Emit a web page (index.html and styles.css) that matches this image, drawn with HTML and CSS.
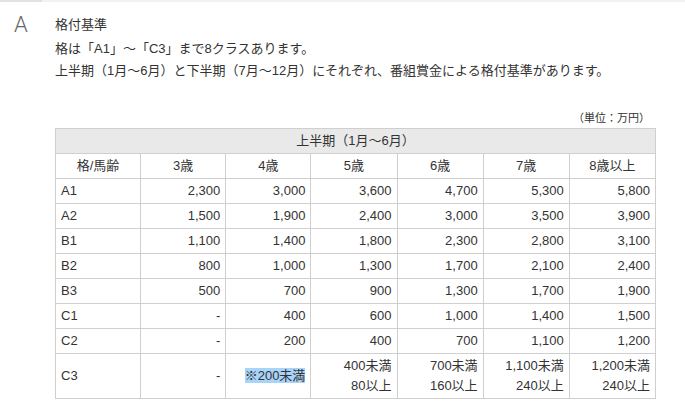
FILE: index.html
```html
<!DOCTYPE html>
<html lang="ja">
<head>
<meta charset="utf-8">
<link rel="stylesheet" href="styles.css">
</head>
<body>
<div class="topbar"><div class="topbar-tab"></div></div>
<section class="qa">
  <div class="qa-mark">A</div>
  <div class="qa-body">
    <h2 class="qa-title">格付基準</h2>
    <p class="qa-text">格は「A1」～「C3」まで8クラスあります。<br>上半期（1月～6月）と下半期（7月～12月）にそれぞれ、番組賞金による格付基準があります。</p>
    <div class="unit">（単位：万円）</div>
    <table class="grade">
      <colgroup>
        <col class="c1"><col class="c1"><col class="c1"><col class="c2"><col class="c2"><col class="c2"><col class="c2">
      </colgroup>
      <thead>
        <tr><th colspan="7" class="period">上半期（1月～6月）</th></tr>
        <tr><th>格/馬齢</th><th>3歳</th><th>4歳</th><th>5歳</th><th>6歳</th><th>7歳</th><th>8歳以上</th></tr>
      </thead>
      <tbody>
        <tr><td class="g">A1</td><td>2,300</td><td>3,000</td><td>3,600</td><td>4,700</td><td>5,300</td><td>5,800</td></tr>
        <tr><td class="g">A2</td><td>1,500</td><td>1,900</td><td>2,400</td><td>3,000</td><td>3,500</td><td>3,900</td></tr>
        <tr><td class="g">B1</td><td>1,100</td><td>1,400</td><td>1,800</td><td>2,300</td><td>2,800</td><td>3,100</td></tr>
        <tr><td class="g">B2</td><td>800</td><td>1,000</td><td>1,300</td><td>1,700</td><td>2,100</td><td>2,400</td></tr>
        <tr><td class="g">B3</td><td>500</td><td>700</td><td>900</td><td>1,300</td><td>1,700</td><td>1,900</td></tr>
        <tr><td class="g">C1</td><td>-</td><td>400</td><td>600</td><td>1,000</td><td>1,400</td><td>1,500</td></tr>
        <tr><td class="g">C2</td><td>-</td><td>200</td><td>400</td><td>700</td><td>1,100</td><td>1,200</td></tr>
        <tr><td class="g">C3</td><td>-</td><td><span class="sel">※200未満</span></td><td>400未満<br>80以上</td><td>700未満<br>160以上</td><td>1,100未満<br>240以上</td><td>1,200未満<br>240以上</td></tr>
      </tbody>
    </table>
  </div>
</section>
</body>
</html>
```
FILE: styles.css
```css
html, body {
  margin: 0;
  padding: 0;
  background: #fff;
}
body {
  font-family: "Liberation Sans", "Noto Sans CJK JP", sans-serif;
  color: #333;
  font-size: 13px;
}
.topbar {
  height: 2px;
  background: #f2f2f2;
}
.topbar-tab {
  width: 42px;
  height: 2px;
  background: #e2e2e2;
}
.qa {
  display: flex;
  padding-top: 12px;
}
.qa-mark {
  width: 55px;
  box-sizing: border-box;
  padding-left: 14px;
  font-family: "Roboto", "Liberation Sans", sans-serif;
  font-weight: 300;
  font-size: 22px;
  line-height: 22px;
  color: #666;
}
.qa-body {
  width: 601px;
}
.qa-title {
  margin: 0 0 2px;
  font-size: 13px;
  font-weight: normal;
  line-height: 22px;
}
.qa-text {
  margin: 0;
  line-height: 22px;
  white-space: nowrap;
}
.unit {
  margin-top: 28px;
  padding-right: 6px;
  text-align: right;
  font-size: 11px;
  line-height: 16px;
  margin-bottom: 2px;
}
.grade {
  border-collapse: collapse;
  table-layout: fixed;
  width: 601px;
}
.grade .c1 { width: 85px; }
.grade .c2 { width: 86px; }
.grade th, .grade td {
  border: 1px solid #cfcfcf;
  padding: 2px 5px;
  line-height: 20px;
  font-weight: normal;
  white-space: nowrap;
}
.grade th {
  text-align: center;
}
.grade .period {
  background: #e9e9e9;
}
.grade td {
  text-align: right;
  vertical-align: middle;
}
.grade td.g {
  text-align: left;
}
.sel {
  background: #a8d4fa;
}
```
